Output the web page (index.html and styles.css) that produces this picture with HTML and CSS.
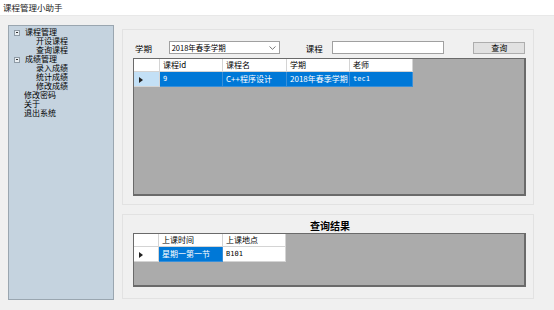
FILE: index.html
```html
<!DOCTYPE html>
<html>
<head>
<meta charset="utf-8">
<link rel="stylesheet" href="styles.css">
</head>
<body>
<div class="window">
  <div class="titlebar">课程管理小助手</div>
  <div class="main">
    <div class="tree">
      <div class="node"><span class="box"></span><span>课程管理</span></div>
      <div class="leaf">开设课程</div>
      <div class="leaf">查询课程</div>
      <div class="node"><span class="box"></span><span>成绩管理</span></div>
      <div class="leaf">录入成绩</div>
      <div class="leaf">统计成绩</div>
      <div class="leaf">修改成绩</div>
      <div class="root">修改密码</div>
      <div class="root">关于</div>
      <div class="root">退出系统</div>
    </div>
    <div class="right">
      <div class="group top">
        <div class="controls">
          <span class="lbl lbl-term">学期</span>
          <div class="select"><span>2018年春季学期</span>
            <svg width="7" height="4" viewBox="0 0 7 4"><path d="M0.5 0.5 L3.5 3.3 L6.5 0.5" fill="none" stroke="#555" stroke-width="0.8"/></svg>
          </div>
          <span class="lbl lbl-course">课程</span>
          <div class="input"></div>
          <div class="btn">查询</div>
        </div>
        <div class="grid grid1">
          <div class="row head">
            <div class="cell rh"></div>
            <div class="cell w63">课程id</div>
            <div class="cell w64">课程名</div>
            <div class="cell w63">学期</div>
            <div class="cell w63">老师</div>
          </div>
          <div class="row data">
            <div class="cell rh sel-rh"><span class="tri"></span></div>
            <div class="cell w63 sel mono">9</div>
            <div class="cell w64 sel">C++程序设计</div>
            <div class="cell w63 sel">2018年春季学期</div>
            <div class="cell w63 sel mono">tec1</div>
          </div>
        </div>
      </div>
      <div class="group bottom">
        <div class="result-title">查询结果</div>
        <div class="grid grid2">
          <div class="row head">
            <div class="cell rh2"></div>
            <div class="cell w64">上课时间</div>
            <div class="cell w63">上课地点</div>
          </div>
          <div class="row data">
            <div class="cell rh2 white-rh"><span class="tri"></span></div>
            <div class="cell w64 sel">星期一第一节</div>
            <div class="cell w63 white mono">B101</div>
          </div>
        </div>
      </div>
    </div>
  </div>
</div>
</body>
</html>
```
FILE: styles.css
```css
* { box-sizing: border-box; }
html, body { margin: 0; padding: 0; }
body {
  width: 554px;
  height: 310px;
  overflow: hidden;
  background: #f0f0f0;
  font-family: "Noto Sans CJK SC", "Noto Sans", sans-serif;
  font-size: 8px;
  color: #000;
}
.window { width: 554px; height: 310px; display: flex; flex-direction: column; }
.titlebar {
  height: 16px;
  background: #ffffff;
  padding-left: 3px;
  line-height: 15px;
  font-size: 8.5px;
  color: #222;
  border-bottom: 1px solid #e8e8e8;
}
.main { display: flex; padding: 9px 0 0 8px; gap: 8px; }
.tree {
  width: 106px;
  height: 275px;
  background: #c5d3df;
  border: 1px solid #9aa6b0;
  padding: 2px 0 0 5px;
  font-family: "Liberation Sans", "Noto Sans CJK SC", sans-serif;
  font-size: 8px;
  line-height: 9px;
}
.node { display: flex; align-items: center; gap: 5px; height: 9px; }
.box {
  width: 6px; height: 6px;
  border: 1px solid #8f9ba6;
  background: #e9eef2;
  position: relative;
}
.box::after {
  content: "";
  position: absolute;
  left: 1px; top: 1.5px;
  width: 2px; height: 1px;
  background: #333;
}
.leaf { padding-left: 22px; height: 9px; }
.root { padding-left: 10px; height: 9px; }
.right { display: flex; flex-direction: column; gap: 9px; margin-top: 4px; }
.group {
  width: 412px;
  border: 1px solid #e2e2e2;
  background: #f0f0f0;
}
.group.top { height: 176px; padding: 11px 8px 0 10px; }
.group.bottom { height: 85px; padding: 4px 8px 0 10px; }
.controls { display: flex; align-items: center; height: 13px; margin-bottom: 4px; }
.lbl { font-size: 8.5px; }
.lbl-term { margin-left: 2px; width: 34px; }
.select {
  width: 112px; height: 13px;
  background: #fff;
  border: 1px solid #a0a0a0;
  display: flex; align-items: center; justify-content: space-between;
  padding: 0 3px 0 2px;
  font-size: 7.5px;
}
.lbl-course { margin-left: 26px; width: 27px; }
.input { width: 113px; height: 13px; background: #fff; border: 1px solid #a0a0a0; }
.btn {
  margin-left: 29px;
  width: 52px; height: 12px;
  background: #e1e1e1;
  border: 1px solid #adadad;
  text-align: center;
  line-height: 10px;
  font-size: 8px;
}
.grid {
  width: 393px;
  background: #ababab;
  border: 1px solid #6a6a6a;
  border-right-width: 2px;
  border-bottom-width: 2px;
}
.grid1 { height: 138px; }
.grid2 { height: 54px; }
.row { display: flex; }
.head { height: 13px; }
.data { height: 15px; }
.cell {
  background: #fff;
  border-right: 1px solid #d4d4d4;
  border-bottom: 1px solid #d4d4d4;
  padding-left: 3px;
  font-size: 8px;
  white-space: nowrap;
  overflow: hidden;
}
.head .cell { line-height: 12px; }
.data .cell { line-height: 14px; }
.rh { width: 26px; }
.rh2 { width: 25px; }
.w63 { width: 63px; }
.w64 { width: 64px; }
.sel { background: #0078d7; color: #fff; border-right-color: #3a8fd8; border-bottom-color: #3a8fd8; }
.sel-rh { background: #c3e0f6; }
.white-rh { background: #fff; }
.white { background: #fff; }
.mono { font-family: "DejaVu Sans Mono", monospace; font-size: 7px; }
.tri {
  display: inline-block;
  width: 0; height: 0;
  border-top: 3px solid transparent;
  border-bottom: 3px solid transparent;
  border-left: 4px solid #222;
  margin-left: 2px;
  vertical-align: middle;
}
.result-title {
  text-align: center;
  font-weight: bold;
  font-size: 10px;
  line-height: 14px;
  height: 14px;
  margin-left: 2px;
}
```
